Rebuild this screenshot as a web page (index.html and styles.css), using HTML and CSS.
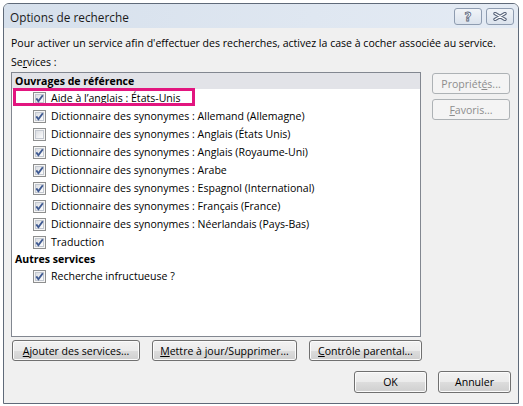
FILE: index.html
```html
<!DOCTYPE html>
<html lang="fr">
<head>
    <meta charset="UTF-8">
    <title>Options de recherche</title>
    <link rel="stylesheet" href="styles.css">
</head>
<body>
    <!-- shared checkbox drawings -->
    <svg class="defs" aria-hidden="true">
        <defs>
            <linearGradient id="boxFill" x1="0" y1="0" x2="1" y2="1">
                <stop offset="0" stop-color="#d8dbe0"/>
                <stop offset="1" stop-color="#ffffff"/>
            </linearGradient>
            <symbol id="box" viewBox="0 0 13 13">
                <rect x="0.5" y="0.5" width="12" height="12" fill="#f6f6f6" stroke="#8e8f8f"/>
                <rect x="2.5" y="2.5" width="8" height="8" fill="url(#boxFill)" stroke="#c3c8d0"/>
            </symbol>
            <symbol id="tick" viewBox="0 0 13 13">
                <path d="M3.3 6.4 L5.4 9.2 L9.8 3.2" fill="none" stroke="#3f5a92" stroke-width="1.9"/>
            </symbol>
        </defs>
    </svg>

    <div class="window">
        <div class="titlebar">
            <span class="title">Options de recherche</span>
            <div class="caption-buttons">
                <span class="caption-btn help">?</span>
                <span class="caption-btn">
                    <svg width="14" height="9" viewBox="0 0 14 9">
                        <path d="M2 1.5 L12 7.5 M12 1.5 L2 7.5" stroke="#58647a" stroke-width="3.4" stroke-linecap="round"/>
                        <path d="M2 1.5 L12 7.5 M12 1.5 L2 7.5" stroke="#ffffff" stroke-width="1.4" stroke-linecap="round"/>
                    </svg>
                </span>
            </div>
        </div>

        <div class="client">
            <p class="intro">Pour activer un service afin d'effectuer des recherches, activez la case à cocher associée au service.</p>
            <p class="field-label">Se<u>r</u>vices :</p>

            <div class="services">
                <div class="service-list">
                    <div class="group shaded">Ouvrages de référence</div>
                    <div class="item highlighted">
                        <svg class="cb"><use href="#box"/><use href="#tick"/></svg>
                        <span>Aide à l’anglais : États-Unis</span>
                    </div>
                    <div class="item">
                        <svg class="cb"><use href="#box"/><use href="#tick"/></svg>
                        <span>Dictionnaire des synonymes : Allemand (Allemagne)</span>
                    </div>
                    <div class="item">
                        <svg class="cb"><use href="#box"/></svg>
                        <span>Dictionnaire des synonymes : Anglais (États Unis)</span>
                    </div>
                    <div class="item">
                        <svg class="cb"><use href="#box"/><use href="#tick"/></svg>
                        <span>Dictionnaire des synonymes : Anglais (Royaume-Uni)</span>
                    </div>
                    <div class="item">
                        <svg class="cb"><use href="#box"/><use href="#tick"/></svg>
                        <span>Dictionnaire des synonymes : Arabe</span>
                    </div>
                    <div class="item">
                        <svg class="cb"><use href="#box"/><use href="#tick"/></svg>
                        <span>Dictionnaire des synonymes : Espagnol (International)</span>
                    </div>
                    <div class="item">
                        <svg class="cb"><use href="#box"/><use href="#tick"/></svg>
                        <span>Dictionnaire des synonymes : Français (France)</span>
                    </div>
                    <div class="item">
                        <svg class="cb"><use href="#box"/><use href="#tick"/></svg>
                        <span>Dictionnaire des synonymes : Néerlandais (Pays-Bas)</span>
                    </div>
                    <div class="item">
                        <svg class="cb"><use href="#box"/><use href="#tick"/></svg>
                        <span>Traduction</span>
                    </div>
                    <div class="group">Autres services</div>
                    <div class="item">
                        <svg class="cb"><use href="#box"/><use href="#tick"/></svg>
                        <span>Recherche infructueuse ?</span>
                    </div>
                </div>

                <div class="side-buttons">
                    <button class="btn" disabled>Propriét<u>é</u>s...</button>
                    <button class="btn" disabled><u>F</u>avoris...</button>
                </div>
            </div>

            <div class="actions">
                <button class="btn add"><u>A</u>jouter des services...</button>
                <button class="btn update"><u>M</u>ettre à jour/Supprimer...</button>
                <button class="btn parental"><u>C</u>ontrôle parental...</button>
            </div>

            <div class="dialog-buttons">
                <button class="btn wide">OK</button>
                <button class="btn wide">Annuler</button>
            </div>
        </div>
    </div>
</body>
</html>
```

FILE: styles.css
```css
body {
    margin: 0;
    background: #ffffff;
    font-family: "Open Sans", sans-serif;
    font-size: 10.55px;
    color: #000;
}
.defs {
    position: absolute;
    width: 0;
    height: 0;
}
.window {
    margin: 3px;
    width: 516px;
    box-sizing: border-box;
    border: 1px solid #5f6a79;
    border-radius: 6px 6px 0 0;
    overflow: hidden;
    display: flex;
    flex-direction: column;
}

/* caption */
.titlebar {
    height: 24px;
    display: flex;
    align-items: flex-start;
    padding: 0 4px 0 6px;
    background: linear-gradient(90deg, #d6e0ec, #dfe7f1 60%, #e4ebf4);
}
.title {
    font-size: 11.8px;
    line-height: 26px;
    color: #1b1b1b;
}
.caption-buttons {
    margin-left: auto;
    margin-top: 4px;
    display: flex;
    gap: 4px;
}
.caption-btn {
    width: 28px;
    height: 17px;
    box-sizing: border-box;
    border: 1px solid #8e9cb0;
    border-radius: 3px;
    background: linear-gradient(#f1f4f8, #dbe3ed);
    display: flex;
    align-items: center;
    justify-content: center;
}
.help {
    font-family: "DejaVu Sans", sans-serif;
    font-size: 12px;
    font-weight: bold;
    color: #ffffff;
    -webkit-text-stroke: 0.8px #58647a;
}

/* client area */
.client {
    background: #f0f0f0;
    padding: 8px 7px 10px 7px;
}
.intro,
.field-label {
    margin: 0;
    line-height: 15px;
}
.field-label {
    margin-top: 4px;
}
.services {
    display: flex;
    margin-top: 2px;
}
.service-list {
    position: relative;
    width: 410px;
    height: 265px;
    box-sizing: border-box;
    border: 1px solid #828790;
    background: #ffffff;
}
.group {
    height: 16px;
    line-height: 16px;
    padding-left: 3px;
    font-weight: bold;
}
.group.shaded {
    background: #e2e3e8;
}
.item {
    height: 18px;
    display: flex;
    align-items: center;
    gap: 5px;
    padding-left: 21px;
}
.cb {
    width: 13px;
    height: 13px;
    flex: none;
}
/* pink callout drawn over the first entry */
.highlighted {
    position: relative;
}
.highlighted::after {
    content: "";
    position: absolute;
    left: 1px;
    top: -1px;
    width: 182px;
    height: 18px;
    box-sizing: border-box;
    border: 3px solid #e2157f;
}

.side-buttons {
    display: flex;
    flex-direction: column;
    gap: 5px;
    margin: 1px 0 0 11px;
}
.side-buttons .btn {
    width: 78px;
}

.btn {
    font: inherit;
    color: #000;
    height: 21px;
    padding: 0;
    border: 1px solid #707070;
    border-radius: 3px;
    background: linear-gradient(#f2f2f2 0%, #ebebeb 50%, #dddddd 50%, #cfcfcf 100%);
    box-shadow: inset 0 0 0 1px #fbfbfb;
}
.btn:disabled {
    color: #8d8d8d;
    border-color: #adb2b5;
    background: #f4f4f4;
    box-shadow: none;
}

.actions {
    display: flex;
    gap: 12px;
    margin: 3px 0 0 1px;
}
.add { width: 128px; }
.update { width: 145px; }
.parental { width: 113px; }

.dialog-buttons {
    display: flex;
    justify-content: flex-end;
    gap: 11px;
    margin-top: 10px;
}
.btn.wide {
    width: 73px;
    height: 22px;
}
```
